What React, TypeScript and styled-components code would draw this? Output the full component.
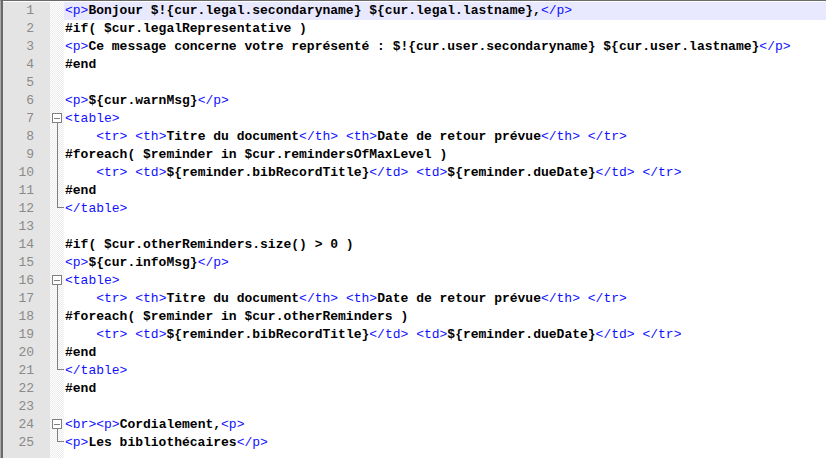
import React from "react";
import styled, { createGlobalStyle } from "styled-components";

const GlobalStyle = createGlobalStyle`
  html, body { margin: 0; padding: 0; background: #ffffff; }
  #root { width: 826px; height: 458px; }
`;

const Frame = styled.div`
  box-sizing: border-box;
  width: 826px;
  height: 458px;
  border-top: 1px solid #6a6a6a;
  border-left: 1px solid #a9a9a9;
  overflow: hidden;
  background: #ffffff;
`;

const Editor = styled.div`
  box-sizing: border-box;
  display: flex;
  height: 100%;
  border-left: 2px solid #6a6a6a;
  padding-top: 1px;
  font-family: "Liberation Mono", "Courier New", monospace;
  font-size: 13px;
  line-height: 18px;
`;

const Gutter = styled.div`
  flex: 0 0 47px;
  background: #e4e4e4;
  display: flex;
  flex-direction: column;
`;

const LineNumber = styled.div`
  height: 18px;
  padding-right: 16px;
  text-align: right;
  color: #8a8a8a;
`;

const FoldMargin = styled.div`
  flex: 0 0 14px;
  display: flex;
  flex-direction: column;
  background-color: #ffffff;
  background-image: repeating-conic-gradient(#ececec 0% 25%, #ffffff 0% 50%);
  background-size: 2px 2px;
`;

const FoldCell = styled.div`
  height: 18px;
  display: block;
  svg { display: block; }
`;

const CodeArea = styled.div`
  flex: 1;
  display: flex;
  flex-direction: column;
  min-width: 0;
`;

const CodeLine = styled.div<{ $active?: boolean }>`
  height: 18px;
  padding-left: 1px;
  white-space: pre;
  background: ${(p) => (p.$active ? "#e8e8ff" : "transparent")};
`;

const Text = styled.span`
  color: #000000;
  font-weight: 700;
`;

const Tag = styled.span`
  color: #1010ff;
  font-weight: 400;
`;

type Fold = "none" | "start" | "mid" | "end";

const lines: { code: string; fold: Fold }[] = [
  { code: "<p>Bonjour $!{cur.legal.secondaryname} ${cur.legal.lastname},</p>", fold: "none" },
  { code: "#if( $cur.legalRepresentative )", fold: "none" },
  { code: "<p>Ce message concerne votre représenté : $!{cur.user.secondaryname} ${cur.user.lastname}</p>", fold: "none" },
  { code: "#end", fold: "none" },
  { code: "", fold: "none" },
  { code: "<p>${cur.warnMsg}</p>", fold: "none" },
  { code: "<table>", fold: "start" },
  { code: "    <tr> <th>Titre du document</th> <th>Date de retour prévue</th> </tr>", fold: "mid" },
  { code: "#foreach( $reminder in $cur.remindersOfMaxLevel )", fold: "mid" },
  { code: "    <tr> <td>${reminder.bibRecordTitle}</td> <td>${reminder.dueDate}</td> </tr>", fold: "mid" },
  { code: "#end", fold: "mid" },
  { code: "</table>", fold: "end" },
  { code: "", fold: "none" },
  { code: "#if( $cur.otherReminders.size() > 0 )", fold: "none" },
  { code: "<p>${cur.infoMsg}</p>", fold: "none" },
  { code: "<table>", fold: "start" },
  { code: "    <tr> <th>Titre du document</th> <th>Date de retour prévue</th> </tr>", fold: "mid" },
  { code: "#foreach( $reminder in $cur.otherReminders )", fold: "mid" },
  { code: "    <tr> <td>${reminder.bibRecordTitle}</td> <td>${reminder.dueDate}</td> </tr>", fold: "mid" },
  { code: "#end", fold: "mid" },
  { code: "</table>", fold: "end" },
  { code: "#end", fold: "none" },
  { code: "", fold: "none" },
  { code: "<br><p>Cordialement,<p>", fold: "start" },
  { code: "<p>Les bibliothécaires</p>", fold: "end" },
];

const FoldMarker: React.FC<{ kind: Fold }> = ({ kind }) => {
  if (kind === "none") return null;
  const stroke = "#808080";
  return (
    <svg width="14" height="18" viewBox="0 0 14 18" shapeRendering="crispEdges">
      {kind === "start" && (
        <>
          <rect x="2.5" y="3.5" width="9" height="9" fill="#ffffff" stroke={stroke} />
          <line x1="4" y1="8.5" x2="10" y2="8.5" stroke={stroke} />
          <line x1="7" y1="13" x2="7" y2="18" stroke={stroke} />
        </>
      )}
      {kind === "mid" && <line x1="7" y1="0" x2="7" y2="18" stroke={stroke} />}
      {kind === "end" && (
        <>
          <line x1="7" y1="0" x2="7" y2="8" stroke={stroke} />
          <line x1="7" y1="7.5" x2="14" y2="7.5" stroke={stroke} />
        </>
      )}
    </svg>
  );
};

const renderCode = (code: string) =>
  code.split(/(<\/?[a-z]+>)/).map((part, i) =>
    part === "" ? null : /^<\/?[a-z]+>$/.test(part) ? (
      <Tag key={i}>{part}</Tag>
    ) : (
      <Text key={i}>{part}</Text>
    )
  );

export default function App() {
  return (
    <>
      <GlobalStyle />
      <Frame>
        <Editor>
          <Gutter>
            {lines.map((_, i) => (
              <LineNumber key={i}>{i + 1}</LineNumber>
            ))}
          </Gutter>
          <FoldMargin>
            {lines.map((l, i) => (
              <FoldCell key={i}>
                <FoldMarker kind={l.fold} />
              </FoldCell>
            ))}
          </FoldMargin>
          <CodeArea>
            {lines.map((l, i) => (
              <CodeLine key={i} $active={i === 0}>
                {renderCode(l.code)}
              </CodeLine>
            ))}
          </CodeArea>
        </Editor>
      </Frame>
    </>
  );
}
